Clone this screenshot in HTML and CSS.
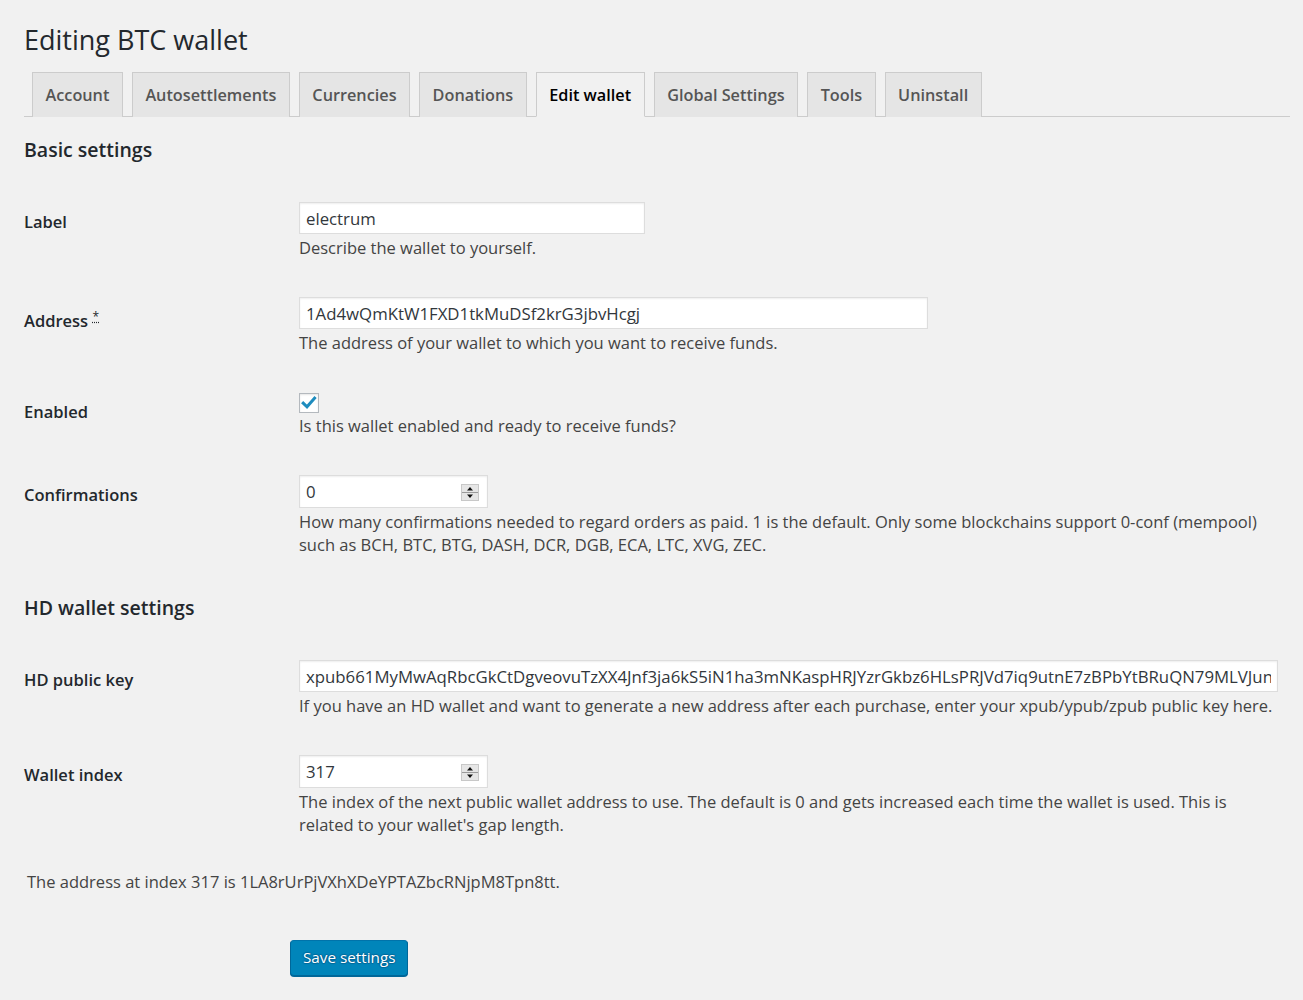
FILE: index.html
```html
<!DOCTYPE html>
<html lang="en">
<head>
    <meta charset="UTF-8">
    <title>Editing BTC wallet</title>
    <link rel="stylesheet" href="styles.css">
</head>
<body>
<div class="wrap">
    <h1>Editing BTC wallet</h1>

    <!-- tabs -->
    <nav class="nav-tabs">
        <a class="nav-tab" href="#">Account</a>
        <a class="nav-tab" href="#">Autosettlements</a>
        <a class="nav-tab" href="#">Currencies</a>
        <a class="nav-tab" href="#">Donations</a>
        <a class="nav-tab active" href="#">Edit wallet</a>
        <a class="nav-tab" href="#">Global Settings</a>
        <a class="nav-tab" href="#">Tools</a>
        <a class="nav-tab" href="#">Uninstall</a>
    </nav>

    <form class="wallet-form">
        <h2>Basic settings</h2>

        <div class="row">
            <label class="row-label" for="label">Label</label>
            <div class="row-field">
                <input type="text" id="label" class="text-input w-label" value="electrum">
                <p class="description">Describe the wallet to yourself.</p>
            </div>
        </div>

        <div class="row">
            <label class="row-label required" for="address">Address <abbr title="required">*</abbr></label>
            <div class="row-field">
                <input type="text" id="address" class="text-input w-address" value="1Ad4wQmKtW1FXD1tkMuDSf2krG3jbvHcgj">
                <p class="description">The address of your wallet to which you want to receive funds.</p>
            </div>
        </div>

        <div class="row">
            <label class="row-label" for="enabled">Enabled</label>
            <div class="row-field">
                <span class="checkbox" id="enabled">
                    <svg width="18" height="18" viewBox="0 0 18 18"><path d="M3.2 9.2 L7 12.8 L14.6 4.2" fill="none" stroke="#1e8cbe" stroke-width="3" stroke-linecap="square"/></svg>
                </span>
                <p class="description after-check">Is this wallet enabled and ready to receive funds?</p>
            </div>
        </div>

        <div class="row">
            <label class="row-label" for="confirmations">Confirmations</label>
            <div class="row-field">
                <div class="number-input">
                    <input type="text" id="confirmations" value="0">
                    <span class="spinner">
                        <svg width="18" height="17" viewBox="0 0 18 17"><rect x="0.5" y="0.5" width="17" height="16" fill="#e6e6e6" stroke="#c8c8c8"/><line x1="1" y1="8.5" x2="17" y2="8.5" stroke="#9a9a9a"/><path d="M9 3 L12 6.5 L6 6.5 Z" fill="#111"/><path d="M9 14 L12 10.5 L6 10.5 Z" fill="#111"/></svg>
                    </span>
                </div>
                <p class="description">How many confirmations needed to regard orders as paid. 1 is the default. Only some blockchains support 0-conf (mempool)<br>such as BCH, BTC, BTG, DASH, DCR, DGB, ECA, LTC, XVG, ZEC.</p>
            </div>
        </div>

        <h2>HD wallet settings</h2>

        <div class="row">
            <label class="row-label" for="hdkey">HD public key</label>
            <div class="row-field">
                <input type="text" id="hdkey" class="text-input w-full" value="xpub661MyMwAqRbcGkCtDgveovuTzXX4Jnf3ja6kS5iN1ha3mNKaspHRJYzrGkbz6HLsPRJVd7iq9utnE7zBPbYtBRuQN79MLVJun">
                <p class="description nowrap">If you have an HD wallet and want to generate a new address after each purchase, enter your xpub/ypub/zpub public key here.</p>
            </div>
        </div>

        <div class="row">
            <label class="row-label" for="index">Wallet index</label>
            <div class="row-field">
                <div class="number-input">
                    <input type="text" id="index" value="317">
                    <span class="spinner">
                        <svg width="18" height="17" viewBox="0 0 18 17"><rect x="0.5" y="0.5" width="17" height="16" fill="#e6e6e6" stroke="#c8c8c8"/><line x1="1" y1="8.5" x2="17" y2="8.5" stroke="#9a9a9a"/><path d="M9 3 L12 6.5 L6 6.5 Z" fill="#111"/><path d="M9 14 L12 10.5 L6 10.5 Z" fill="#111"/></svg>
                    </span>
                </div>
                <p class="description">The index of the next public wallet address to use. The default is 0 and gets increased each time the wallet is used. This is<br>related to your wallet's gap length.</p>
            </div>
        </div>

        <p class="index-note">The address at index 317 is 1LA8rUrPjVXhXDeYPTAZbcRNjpM8Tpn8tt.</p>

        <div class="submit">
            <button type="submit" class="button-primary">Save settings</button>
        </div>
    </form>
</div>
</body>
</html>
```

FILE: styles.css
```css
body {
    margin: 0;
    background-color: #f1f1f1;
    color: #444;
    font-family: "Open Sans", "Noto Sans", sans-serif;
    font-size: 16.5px;
}

.wrap {
    padding: 0 13px 0 24px;
}

h1 {
    margin: 0;
    padding: 21px 0 13px;
    font-size: 27px;
    font-weight: 400;
    line-height: 38px;
    color: #23282d;
}

.nav-tabs {
    display: flex;
    padding-left: 8px;
    border-bottom: 1px solid #ccc;
}

.nav-tab {
    display: block;
    margin-right: 9px;
    margin-bottom: -1px;
    padding: 1px 12.5px 0;
    line-height: 42px;
    border: 1px solid #ccc;
    border-bottom: none;
    background-color: #e5e5e5;
    color: #555;
    font-size: 16.25px;
    font-weight: 600;
    text-decoration: none;
}

.nav-tab.active {
    background-color: #f1f1f1;
    border-bottom: 1px solid #f1f1f1;
    color: #000;
}

h2 {
    margin: 18px 0;
    font-size: 19.5px;
    font-weight: 600;
    line-height: 30px;
    color: #23282d;
}

.row {
    display: flex;
    padding: 19px 0;
}

.row-label {
    flex: 0 0 275px;
    padding-top: 8px;
    line-height: 24px;
    font-size: 16.5px;
    font-weight: 600;
    color: #23282d;
}

.row-label.required {
    padding-top: 12px;
}

.row-label abbr {
    vertical-align: super;
    line-height: 0;
    font-size: 12px;
    font-weight: 400;
    text-decoration: underline dotted;
    border: none;
}

.row-field {
    flex: 1;
}

.text-input,
.number-input {
    box-sizing: border-box;
    display: block;
    height: 32px;
    padding: 0 6px;
    border: 1px solid #ddd;
    background-color: #fff;
    box-shadow: inset 0 1px 2px rgba(0, 0, 0, 0.07);
    color: #32373c;
    font-family: inherit;
    font-size: 16.8px;
}

.w-label {
    width: 346px;
}

.w-address {
    width: 629px;
}

.w-full {
    width: 979px;
}

.number-input {
    display: flex;
    align-items: center;
    width: 189px;
    height: 33px;
    padding-right: 8px;
}

.number-input input {
    flex: 1;
    min-width: 0;
    padding: 0;
    border: none;
    outline: none;
    background: transparent;
    color: #32373c;
    font-family: inherit;
    font-size: 16.8px;
}

.spinner {
    display: block;
    height: 17px;
}

.checkbox {
    display: flex;
    align-items: center;
    justify-content: center;
    box-sizing: border-box;
    width: 20px;
    height: 20px;
    margin-top: 1px;
    border: 1px solid #b4b9be;
    background-color: #fff;
    box-shadow: inset 0 1px 2px rgba(0, 0, 0, 0.1);
}

.description {
    margin: 2px 0 0;
    font-size: 16.5px;
    line-height: 23px;
    color: #444;
}

.description.after-check {
    margin-top: 1px;
}

.nowrap {
    white-space: nowrap;
}

.index-note {
    margin: 15px 0 0;
    padding-left: 3px;
    font-size: 16.5px;
    line-height: 23px;
}

.submit {
    padding: 47px 0 20px 266px;
}

.button-primary {
    height: 36px;
    padding: 0 12px 2px;
    border: 1px solid #006799;
    border-top-color: #0073aa;
    border-radius: 4px;
    background-color: #0085ba;
    box-shadow: 0 1px 0 #006799;
    color: #fff;
    text-shadow: 0 -1px 1px #006799, 1px 0 1px #006799, 0 1px 1px #006799, -1px 0 1px #006799;
    font-family: inherit;
    font-size: 15.25px;
    cursor: pointer;
}
```
